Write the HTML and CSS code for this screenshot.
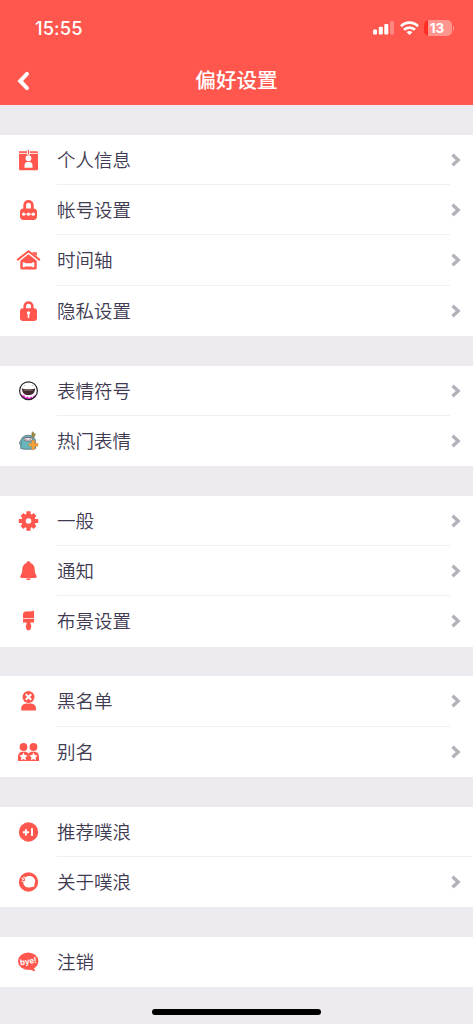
FILE: index.html
```html
<!DOCTYPE html>
<html lang="zh-CN">
<head>
    <meta charset="UTF-8">
    <meta name="viewport" content="width=device-width, initial-scale=1.0">
    <title>偏好设置</title>
    <link rel="stylesheet" href="styles.css">
</head>
<body>
    <svg class="symbols" width="0" height="0">
        <symbol id="chevron" viewBox="0 0 10 14">
            <path d="M1.5 1.7 7.2 7 1.5 12.3" fill="none" stroke="#b3b2ba" stroke-width="3.3"/>
        </symbol>
    </svg>

    <header class="header">
        <div class="status-bar">
            <span class="time">15:55</span>
            <div class="status-icons">
                <svg width="21" height="14" viewBox="0 0 21 14" fill="#fff">
                    <rect x="0" y="8.5" width="4" height="5" rx="1"/>
                    <rect x="5.8" y="5.8" width="4" height="7.7" rx="1"/>
                    <rect x="11.3" y="3" width="4" height="10.5" rx="1"/>
                    <rect x="17" y="0.3" width="4" height="13.2" rx="1" opacity="0.3"/>
                </svg>
                <svg class="wifi" width="19" height="14" viewBox="0 0 19 14" fill="none" stroke="#fff" stroke-width="2.7">
                    <path d="M1 5.2C5.7.5 13.3.5 18 5.2"/>
                    <path d="M4 8.8c3-3 8-3 11 0"/>
                    <path d="M9.5 14 6.6 11.2c1.5-1.6 4.3-1.6 5.8 0z" fill="#fff" stroke="none"/>
                </svg>
                <div class="battery"><span>13</span></div>
                <div class="battery-cap"></div>
            </div>
        </div>
        <nav class="nav-bar">
            <svg class="back" width="14" height="20" viewBox="0 0 14 20">
                <path d="M11 2.9 4.2 10l6.8 7.1" fill="none" stroke="#fff" stroke-width="4" stroke-linecap="round"/>
            </svg>
            <h1>偏好设置</h1>
        </nav>
    </header>

    <main class="settings">
        <section class="group">
            <div class="row">
                <svg class="icon" viewBox="0 0 24 24">
                    <path d="M3.8 3.2h16.7a1 1 0 0 1 1 1V21a1.2 1.2 0 0 1-1.2 1.2H3.7A1.2 1.2 0 0 1 2.5 21V4.2a1 1 0 0 1 1.3-1z"/>
                    <path d="M2.5 5.4h19" stroke="#fff" stroke-width="0.9"/>
                    <path d="M12 1.6v5" stroke="#fff" stroke-width="3"/>
                    <path d="M12 1.8v4" stroke="#ff574d" stroke-width="1.3"/>
                    <circle cx="12" cy="10.2" r="2.9" fill="#fff"/>
                    <path d="M8 19.8v-2.5c0-4.6 8-4.6 8 0v2.5z" fill="#fff"/>
                </svg>
                <div class="label">个人信息</div>
                <svg class="chevron"><use href="#chevron"/></svg>
            </div>
            <div class="row">
                <svg class="icon" viewBox="0 0 24 24">
                    <path d="M8.2 12V7.2c0-5 7.6-5 7.6 0V12" fill="none" stroke="#ff574d" stroke-width="2.8"/>
                    <rect x="3.5" y="10.5" width="17" height="11.4" rx="3.6"/>
                    <path d="M5.5 16.2h13" stroke="#fff" stroke-width="0.8"/>
                    <g fill="#fff">
                        <circle cx="7.2" cy="16.2" r="1.6"/>
                        <circle cx="12" cy="16.2" r="1.6"/>
                        <circle cx="16.8" cy="16.2" r="1.6"/>
                    </g>
                </svg>
                <div class="label">帐号设置</div>
                <svg class="chevron"><use href="#chevron"/></svg>
            </div>
            <div class="row">
                <svg class="icon" viewBox="0 0 24 24">
                    <path d="M15.8 4.2h4.5V8l-4.5-3z"/>
                    <path d="M1.3 11.6 12 3.2l10.7 8.4" fill="none" stroke="#ff574d" stroke-width="2" stroke-linecap="round"/>
                    <path d="M12 6.2 20.2 12.8V20a1.6 1.6 0 0 1-1.6 1.6H5.4A1.6 1.6 0 0 1 3.8 20v-7.2z"/>
                    <path d="M6.2 14.3h1.5l1.2 1h6.2l1.2-1h1.5v5h-1.5l-1.2-.8H8.9l-1.2.8H6.2z" fill="#fff"/>
                </svg>
                <div class="label">时间轴</div>
                <svg class="chevron"><use href="#chevron"/></svg>
            </div>
            <div class="row">
                <svg class="icon" viewBox="0 0 24 24">
                    <path d="M8.2 11V7.2c0-5 7.6-5 7.6 0V11" fill="none" stroke="#ff574d" stroke-width="2.6"/>
                    <rect x="3.5" y="9.3" width="17" height="12.7" rx="3"/>
                    <circle cx="12" cy="13.8" r="1.6" fill="#fff"/>
                    <path d="M12 13.5v5.5" stroke="#fff" stroke-width="1.6"/>
                </svg>
                <div class="label">隐私设置</div>
                <svg class="chevron"><use href="#chevron"/></svg>
            </div>
        </section>

        <section class="group">
            <div class="row">
                <svg class="icon" viewBox="0 0 24 24">
                    <circle cx="12" cy="11.7" r="8.9" fill="#fff"/>
                    <path d="M3.8 14.5c1 3.2 4 6 8.2 6s7.2-2.7 8.2-6l-1.5 2.2-1.2-.4-1.5 2.5-1.5-1.2-1.7 1.7-2-1.8-1.7 1.2-1.3-2.4-1.7.3z" fill="#f31fd0"/>
                    <circle cx="12" cy="11.7" r="8.9" fill="none" stroke="#28232a" stroke-width="1.2"/>
                    <path d="M5.4 9.2c1.3.8 2.7 1.1 6.6 1.1s5.3-.3 6.6-1.1c-.1 4.5-2.5 6.9-6.6 6.9S5.5 13.7 5.4 9.2z" fill="#432c2e"/>
                    <path d="M7 10.7l1 1.2 1-1.2 1.2 1.2 1.2-1.2 1.2 1.2 1.2-1.2 1.2 1.2 1.2-1.2" fill="none" stroke="#b8a6a5" stroke-width=".5"/>
                    <circle cx="8.3" cy="6.6" r=".4" fill="#333"/>
                    <circle cx="15.7" cy="6.6" r=".4" fill="#333"/>
                </svg>
                <div class="label">表情符号</div>
                <svg class="chevron"><use href="#chevron"/></svg>
            </div>
            <div class="row">
                <svg class="icon" viewBox="0 0 24 24">
                    <path d="M4.2 19.5l.4-8.5c1-3 3-4.3 6-4.6 4-.3 7 1 8.2 4.6l.2 8.5c-4 1-11 1.2-14.8 0z" fill="#69b5bd" stroke="#536970" stroke-width=".8"/>
                    <path d="M4.5 11.5c-1.2.8-1.7 2-1.3 3.8l1.6 1.2" fill="#69b5bd" stroke="#536970" stroke-width=".7"/>
                    <rect x="7.5" y="8.5" width="8.5" height="3.5" rx="1.7" fill="#e8dfe0" stroke="#6c5863" stroke-width=".8"/>
                    <path d="M9.5 9.7v1M13.7 9.7v1" stroke="#3f343d" stroke-width=".8"/>
                    <path d="M15.8 7.5c-.9-2-.5-3.5.3-4.8 1 .6 1.5 1.5 1.5 2.6l1-.8c.4 1.6-.4 3.4-1.9 4z" fill="#a78b38" stroke="#6b6a38" stroke-width=".5"/>
                    <path d="M15.3 11.3h3v3h3.2v3h-3.2v3.3h-3v-3.3h-3v-3h3z" fill="#f5a13a" stroke="#bd7539" stroke-width=".3"/>
                </svg>
                <div class="label">热门表情</div>
                <svg class="chevron"><use href="#chevron"/></svg>
            </div>
        </section>

        <section class="group">
            <div class="row">
                <svg class="icon" viewBox="0 0 24 24">
                    <g stroke="#ff574d" stroke-width="4.2">
                        <path d="M12 2.3v19.4M2.3 12h19.4"/>
                        <path d="M5.5 5.5l13 13M18.5 5.5l-13 13"/>
                    </g>
                    <circle cx="12" cy="12" r="7.2"/>
                    <circle cx="12" cy="12" r="2.8" fill="#fff"/>
                </svg>
                <div class="label">一般</div>
                <svg class="chevron"><use href="#chevron"/></svg>
            </div>
            <div class="row">
                <svg class="icon" viewBox="0 0 24 24">
                    <path d="M12 2.2c1.2 0 1.8.7 2 1.7 2.8 1 4.2 3.3 4.2 6.3 0 3.2.7 4.6 1.7 6.2.9 1.5.2 2.5-1.5 2.5H5.6c-1.7 0-2.4-1-1.5-2.5 1-1.6 1.7-3 1.7-6.2 0-3 1.4-5.3 4.2-6.3.2-1 .8-1.7 2-1.7z"/>
                    <path d="M9.5 19.6h5c-.3 2.2-4.7 2.2-5 0z"/>
                </svg>
                <div class="label">通知</div>
                <svg class="chevron"><use href="#chevron"/></svg>
            </div>
            <div class="row">
                <svg class="icon" viewBox="0 0 24 24">
                    <path d="M6.5 9V5.5c0-2 1-3 3-3l5.5-.3 2.6-.5V9z"/>
                    <path d="M6.5 9.8h11.1v3.7H14v1.2a5 5 0 0 1 .3 5.2c-.8 1.9-3.7 1.9-4.5 0a5 5 0 0 1 .3-5.2v-1.2H6.5z"/>
                </svg>
                <div class="label">布景设置</div>
                <svg class="chevron"><use href="#chevron"/></svg>
            </div>
        </section>

        <section class="group">
            <div class="row">
                <svg class="icon" viewBox="0 0 24 24">
                    <circle cx="12" cy="8" r="6"/>
                    <path d="M9.3 5.3l5.4 5.4m0-5.4-5.4 5.4" stroke="#fff" stroke-width="2"/>
                    <path d="M4.7 21.5v-2.2c0-3 2-4.4 4.8-4.8h5c2.8.4 4.9 1.8 4.9 4.8v2.2z"/>
                </svg>
                <div class="label">黑名单</div>
                <svg class="chevron"><use href="#chevron"/></svg>
            </div>
            <div class="row">
                <svg class="icon" viewBox="0 0 24 24">
                    <circle cx="7" cy="7" r="3.9"/>
                    <circle cx="17" cy="7" r="3.9"/>
                    <path d="M1.5 21v-4.5c0-3 2-4.8 4.7-4.8h2c1.6 0 2.9.6 3.8 1.7.9-1.1 2.2-1.7 3.8-1.7h2c2.7 0 4.7 1.8 4.7 4.8V21z"/>
                    <path d="M7 12.5l1.2 2.6 2.9.4-2.1 2 .5 2.8L7 18.9l-2.5 1.4.5-2.8-2.1-2 2.9-.4zM17 12.5l1.2 2.6 2.9.4-2.1 2 .5 2.8-2.5-1.4-2.5 1.4.5-2.8-2.1-2 2.9-.4z" fill="#fff"/>
                </svg>
                <div class="label">别名</div>
                <svg class="chevron"><use href="#chevron"/></svg>
            </div>
        </section>

        <section class="group">
            <div class="row no-chevron">
                <svg class="icon" viewBox="0 0 24 24">
                    <circle cx="12" cy="12" r="9.7"/>
                    <path d="M6.3 12.3h6.2M9.4 9.2v6.2M15.5 8.2v7.7" stroke="#fff" stroke-width="1.9"/>
                </svg>
                <div class="label">推荐噗浪</div>
            </div>
            <div class="row">
                <svg class="icon" viewBox="0 0 24 24">
                    <circle cx="12" cy="12" r="9.7"/>
                    <path d="M8.5 8c1.3-2.2 6-2.6 8.2-.8 2.2 1.7 2.5 4.7 1.2 6.8v2.5l-1.9.3c-2.5 1-5.5.8-7.3-.4-1.5-1.2-2.2-2.9-1.9-4.8l1.5-.4z" fill="#fff"/>
                    <path d="M5.5 8.2l1.4 1.3M7.5 6.7l.2 1.3M5.5 11.2h1.2" stroke="#fff" stroke-width="1.1" stroke-linecap="round"/>
                </svg>
                <div class="label">关于噗浪</div>
                <svg class="chevron"><use href="#chevron"/></svg>
            </div>
        </section>

        <section class="group">
            <div class="row">
                <svg class="icon" viewBox="0 0 24 24">
                    <ellipse cx="11.7" cy="11.2" rx="10.2" ry="8.7"/>
                    <path d="M12.5 18.5l5-1.5c-.2 1.8.5 3 1.7 4.2-2.8 0-4.7-.8-6.7-2.7z"/>
                    <text class="bye" x="11.9" y="14" text-anchor="middle" transform="rotate(-9 12 12)">bye!</text>
                </svg>
                <div class="label">注销</div>
            </div>
        </section>
    </main>

    <div class="home-indicator"></div>
</body>
</html>
```
FILE: styles.css
```css
* {
    box-sizing: border-box;
}

body {
    margin: 0;
    height: 1024px;
    overflow: hidden;
    display: flex;
    flex-direction: column;
    background-color: #eceaef;
    color: #403a52;
    font-family: Inter, "Noto Sans CJK SC", sans-serif;
}

.symbols {
    position: absolute;
}

/* Header */
.header {
    height: 105px;
    background-color: #ff574d;
    color: #fff;
}

.status-bar {
    height: 56px;
    padding: 0 19px 0 35px;
    display: flex;
    align-items: center;
    justify-content: space-between;
}

.time {
    font-size: 18.3px;
    font-weight: 550;
    letter-spacing: 0.1px;
    line-height: 22px;
}

.status-icons {
    display: flex;
    align-items: center;
}

.wifi {
    margin: 0 5px 0 6px;
}

.battery {
    width: 28px;
    height: 16px;
    border-radius: 5px;
    background: linear-gradient(to right, #ff2d25 4px, #ff958f 4px);
    font-size: 13.5px;
    font-weight: 700;
    line-height: 16px;
    text-align: center;
}

.battery span {
    margin-right: 1px;
}

.battery-cap {
    width: 1.5px;
    height: 5px;
    margin-left: 1px;
    border-radius: 0 2px 2px 0;
    background-color: #ff958f;
}

.nav-bar {
    height: 49px;
    padding: 0 16px;
    display: grid;
    grid-template-columns: 14px 1fr 14px;
    align-items: center;
}

h1 {
    margin: 0;
    font-size: 20.6px;
    font-weight: 500;
    line-height: 28px;
    text-align: center;
}

/* Settings list */
.settings {
    padding-top: 29.8px;
    display: flex;
    flex-direction: column;
    gap: 29.8px;
}

.group {
    background-color: #fff;
}

.row {
    height: 50.24px;
    padding: 0 12px 0 16px;
    display: grid;
    grid-template-columns: 25px 1fr 10px;
    grid-template-rows: 100%;
    align-items: center;
}

.icon {
    width: 25px;
    height: 24px;
    fill: #ff574d;
}

.label {
    height: 100%;
    margin-left: 16px;
    font-size: 18.5px;
    font-weight: 350;
    line-height: 51px;
}

.row:not(:last-child) .label {
    margin-right: 1px;
    border-bottom: 1px solid #f0eff2;
}

.row.no-chevron:not(:last-child) .label {
    margin-right: -22px;
}

.chevron {
    width: 10px;
    height: 14px;
}

.bye {
    fill: #fff;
    font-family: Inter, sans-serif;
    font-size: 7.8px;
    font-weight: 700;
}

.home-indicator {
    width: 169px;
    height: 6px;
    margin: auto auto 9px;
    border-radius: 3px;
    background-color: #000;
}
```
